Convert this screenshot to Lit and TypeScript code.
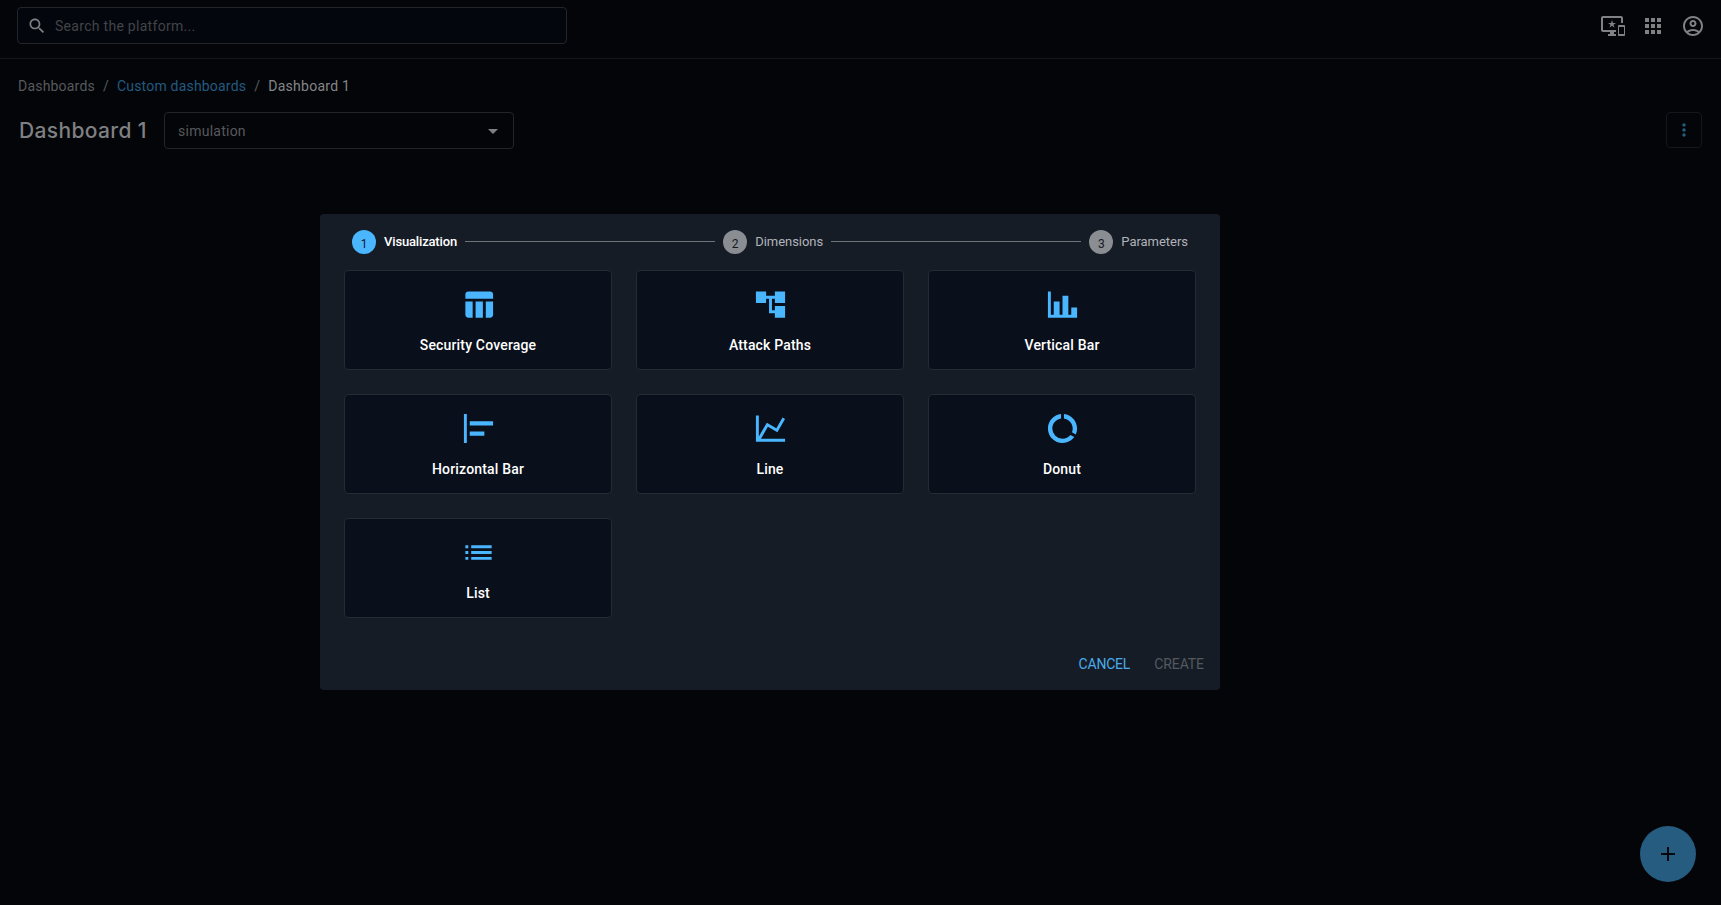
import { LitElement, html, css, svg } from "lit";
import { customElement, property } from "lit/decorators.js";
import { classMap } from "lit/directives/class-map.js";

const icons: Record<string, string> = {
  search:
    "M15.5 14h-.79l-.28-.27C15.41 12.59 16 11.11 16 9.5 16 5.91 13.09 3 9.5 3S3 5.91 3 9.5 5.91 16 9.5 16c1.61 0 3.09-.59 4.23-1.57l.27.28v.79l5 4.99L20.49 19l-4.99-5zm-6 0C7.01 14 5 11.99 5 9.5S7.01 5 9.5 5 14 7.01 14 9.5 11.99 14 9.5 14z",
  devices:
    "M23 11.01 18 11c-.55 0-1 .45-1 1v9c0 .55.45 1 1 1h5c.55 0 1-.45 1-1v-9c0-.55-.45-.99-1-.99zM23 20h-5v-7h5v7zM20 2H2C.89 2 0 2.89 0 4v12c0 1.1.89 2 2 2h7v2H7v2h8v-2h-2v-2h2v-2H2V4h18v5h2V4c0-1.11-.9-2-2-2zm-8.03 7L11 6l-.97 3H7l2.47 1.76-.94 2.91 2.47-1.8 2.47 1.8-.94-2.91L15 9h-3.03z",
  apps: "M4 8h4V4H4v4zm6 12h4v-4h-4v4zm-6 0h4v-4H4v4zm0-6h4v-4H4v4zm6 0h4v-4h-4v4zm6-10v4h4V4h-4zm-6 4h4V4h-4v4zm6 6h4v-4h-4v4zm0 6h4v-4h-4v4z",
  account:
    "M12 2C6.48 2 2 6.48 2 12s4.48 10 10 10 10-4.48 10-10S17.52 2 12 2zM7.35 18.5C8.66 17.56 10.26 17 12 17s3.34.56 4.65 1.5c-1.31.94-2.91 1.5-4.65 1.5s-3.34-.56-4.65-1.5zm10.79-1.38C16.45 15.8 14.32 15 12 15s-4.45.8-6.14 2.12C4.7 15.73 4 13.95 4 12c0-4.42 3.58-8 8-8s8 3.58 8 8c0 1.95-.7 3.73-1.86 5.12zM12 6c-1.93 0-3.5 1.57-3.5 3.5S10.07 13 12 13s3.5-1.57 3.5-3.5S13.93 6 12 6zm0 5c-.83 0-1.5-.67-1.5-1.5S11.17 8 12 8s1.5.67 1.5 1.5S12.83 11 12 11z",
  caret: "M7 10l5 5 5-5z",
  more: "M12 8c1.1 0 2-.9 2-2s-.9-2-2-2-2 .9-2 2 .9 2 2 2zm0 2c-1.1 0-2 .9-2 2s.9 2 2 2 2-.9 2-2-.9-2-2-2zm0 6c-1.1 0-2 .9-2 2s.9 2 2 2 2-.9 2-2-.9-2-2-2z",
  add: "M19 13h-6v6h-2v-6H5v-2h6V5h2v6h6v2z",
  table:
    "M10 10.02h5V21h-5V10.02zM17 21h3c1.1 0 2-.9 2-2v-9h-5v11zm3-18H5c-1.1 0-2 .9-2 2v3h19V5c0-1.1-.9-2-2-2zM3 19c0 1.1.9 2 2 2h3V10H3v9z",
  tree: "M22 11V3h-7v3H9V3H2v8h7V8h2v10h4v3h7v-8h-7v3h-2V8h2v3z",
  bars: "M22,21H2V3H4V19H6V10H10V19H12V6H16V19H18V14H22V21Z",
  hbars: "M4 22H2V2h2v20zM22 7H6v3h16V7zm-6 7H6v3h10v-3z",
  line: "M16,11.78L20.24,4.45L21.97,5.45L16.74,14.5L10.23,10.75L5.46,19H22V21H2V3H4V17.54L9.5,8L16,11.78Z",
  donut:
    "M13,2.05V5.08C16.39,5.57 19,8.47 19,12C19,12.9 18.82,13.75 18.5,14.54L21.12,16.07C21.68,14.83 22,13.45 22,12C22,6.82 18.05,2.55 13,2.05M12,19A7,7 0 0,1 5,12C5,8.47 7.61,5.57 11,5.08V2.05C5.94,2.55 2,6.81 2,12A10,10 0 0,0 12,22C15.3,22 18.23,20.39 20.05,17.91L17.45,16.38C16.17,18 14.21,19 12,19Z",
  list: "M3 13h2v-2H3v2zm0 4h2v-2H3v2zm0-8h2V7H3v2zm4 4h14v-2H7v2zm0 4h14v-2H7v2zM7 7v2h14V7H7z",
};

@customElement("ui-icon")
class UiIcon extends LitElement {
  @property() name = "";
  static styles = css`
    :host { display: block; flex: none; width: 24px; height: 24px; }
    .glyph { display: block; width: 100%; height: 100%; fill: currentColor; }
  `;
  render() {
    return html`<svg class="glyph" viewBox="0 0 24 24">${svg`<path d=${icons[this.name]}></path>`}</svg>`;
  }
}

@customElement("top-bar")
class TopBar extends LitElement {
  static styles = css`
    :host {
      display: flex; justify-content: space-between; align-items: flex-start;
      box-sizing: border-box; height: 59px; padding: 7px 16px 0 17px;
      border-bottom: 1px solid #15171b;
    }
    .search {
      display: flex; align-items: center; gap: 8px; box-sizing: border-box;
      width: 550px; height: 37px; padding: 0 9px; border: 1px solid #232529;
      border-radius: 4px; background: #03060d; color: #424447;
      font-size: 14px; letter-spacing: 0.29px;
    }
    .lens { width: 20px; height: 20px; color: #7f8082; }
    .actions { display: flex; gap: 16px; padding-top: 7px; color: #808183; }
  `;
  render() {
    return html`
      <div class="search"><ui-icon class="lens" name="search"></ui-icon><span>Search the platform...</span></div>
      <div class="actions">
        <ui-icon name="devices"></ui-icon><ui-icon name="apps"></ui-icon><ui-icon name="account"></ui-icon>
      </div>
    `;
  }
}

@customElement("widget-dialog")
class WidgetDialog extends LitElement {
  private steps = ["Visualization", "Dimensions", "Parameters"];
  private types = [
    ["table", "Security Coverage"],
    ["tree", "Attack Paths"],
    ["bars", "Vertical Bar"],
    ["hbars", "Horizontal Bar"],
    ["line", "Line"],
    ["donut", "Donut"],
    ["list", "List"],
  ];
  static styles = css`
    :host {
      display: flex; flex-direction: column; box-sizing: border-box;
      width: 900px; height: 476px; padding: 16px 24px 8px;
      border-radius: 4px; background: #161c26;
    }
    .stepper { display: flex; align-items: center; height: 24px; padding: 0 8px; }
    .step {
      display: flex; align-items: center; gap: 8px; color: #b0b3b8;
      font-size: 13px; font-weight: 400; letter-spacing: -0.03px;
    }
    .active { color: #fff; font-weight: 500; letter-spacing: -0.16px; }
    .dot {
      display: flex; align-items: center; justify-content: center; box-sizing: border-box;
      width: 24px; height: 24px; padding-top: 3px; border-radius: 50%;
      background: #8a8d92; color: #15181f; font-size: 12px; font-weight: 400; letter-spacing: 0;
    }
    .active .dot { background: #4ab6ff; }
    .label { position: relative; top: -1px; }
    .rule { flex: 1; height: 1px; margin: 0 8px; background: #6f7277; transform: translateY(-1px); }
    .grid {
      display: grid; grid-template-columns: repeat(3, 1fr); grid-auto-rows: 100px;
      gap: 24px; margin-top: 16px;
    }
    .card {
      display: flex; flex-direction: column; align-items: center; box-sizing: border-box;
      padding-top: 16px; border: 1px solid #252b35; border-radius: 4px;
      background: #090f1b; color: #fff;
    }
    .art { width: 35px; height: 35px; color: #4ab6ff; }
    .name {
      margin-top: 12px; font-size: 14px; font-weight: 500;
      line-height: 22px; letter-spacing: 0.17px;
    }
    .actions {
      display: flex; justify-content: flex-end; gap: 24px; margin: auto -8px 0 0;
      font-size: 14px; line-height: 36px; letter-spacing: -0.08px;
    }
    .cancel { color: #4aabeb; letter-spacing: -0.2px; }
    .create { color: #54585f; }
  `;
  render() {
    return html`
      <div class="stepper">
        ${this.steps.map(
          (s, i) => html`
            ${i ? html`<span class="rule"></span>` : ""}
            <div class=${classMap({ step: true, active: i === 0 })}>
              <span class="dot">${i + 1}</span><span class="label">${s}</span>
            </div>`
        )}
      </div>
      <div class="grid">
        ${this.types.map(
          ([icon, name]) => html`<div class="card">
            <ui-icon class="art" name=${icon}></ui-icon><span class="name">${name}</span>
          </div>`
        )}
      </div>
      <div class="actions"><span class="cancel">CANCEL</span><span class="create">CREATE</span></div>
    `;
  }
}

@customElement("app-root")
class AppRoot extends LitElement {
  static styles = css`
    :host {
      display: block; position: relative; box-sizing: border-box; height: 905px; overflow: hidden;
      background: #030509; color: #7f8082; font-family: Roboto, "Liberation Sans", sans-serif;
      font-size: 14px;
    }
    .crumbs {
      display: flex; gap: 8px; padding: 17px 18px 0; line-height: 20px;
      color: #58595c; letter-spacing: 0.2px;
    }
    .link { color: #245a80; }
    .here { color: #858688; letter-spacing: 0.27px; }
    .heading { display: flex; align-items: flex-start; padding: 16px 19px 0 18px; }
    .title {
      box-sizing: border-box; width: 146px; padding-left: 1px; font: 500 21px/37px Inter, sans-serif;
      letter-spacing: 0.36px; white-space: nowrap; color: #7f8082;
    }
    .select {
      display: flex; align-items: center; justify-content: space-between; box-sizing: border-box;
      width: 350px; height: 37px; padding: 0 8px 0 13px; border: 1px solid #232529;
      border-radius: 4px; color: #58595c; letter-spacing: 0.25px;
    }
    .caret { color: #7f8082; }
    .more {
      display: flex; align-items: center; justify-content: center; box-sizing: border-box;
      width: 36px; height: 36px; margin-left: auto; border: 1px solid #14171b;
      border-radius: 4px; color: #255c80;
    }
    .dots { width: 20px; height: 20px; }
    .dialog { position: absolute; left: 320px; top: 214px; }
    .fab {
      position: absolute; right: 25px; bottom: 23px; display: flex; align-items: center;
      justify-content: center; width: 56px; height: 56px; border-radius: 50%;
      background: #255c80; color: #04070c;
    }
  `;
  render() {
    return html`
      <top-bar></top-bar>
      <nav class="crumbs">
        <span>Dashboards</span><span>/</span><span class="link">Custom dashboards</span><span>/</span
        ><span class="here">Dashboard 1</span>
      </nav>
      <div class="heading">
        <div class="title">Dashboard 1</div>
        <div class="select"><span>simulation</span><ui-icon class="caret" name="caret"></ui-icon></div>
        <div class="more"><ui-icon class="dots" name="more"></ui-icon></div>
      </div>
      <div class="fab"><ui-icon name="add"></ui-icon></div>
      <widget-dialog class="dialog"></widget-dialog>
    `;
  }
}
